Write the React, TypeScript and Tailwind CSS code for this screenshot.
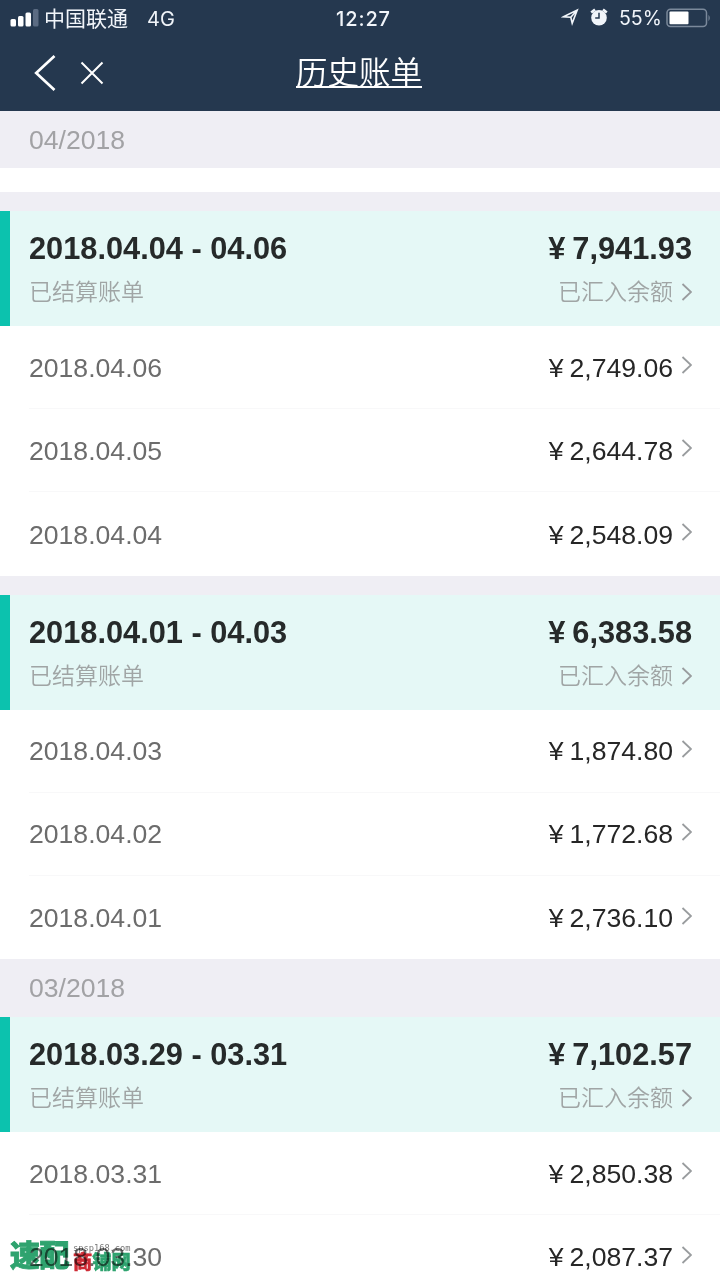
type Day = { date: string; amount: string };

type Bill = {
  range: string;
  total: string;
  days: Day[];
};

const aprilBills: Bill[] = [
  {
    range: "2018.04.04 - 04.06",
    total: "7,941.93",
    days: [
      { date: "2018.04.06", amount: "2,749.06" },
      { date: "2018.04.05", amount: "2,644.78" },
      { date: "2018.04.04", amount: "2,548.09" },
    ],
  },
  {
    range: "2018.04.01 - 04.03",
    total: "6,383.58",
    days: [
      { date: "2018.04.03", amount: "1,874.80" },
      { date: "2018.04.02", amount: "1,772.68" },
      { date: "2018.04.01", amount: "2,736.10" },
    ],
  },
];

const marchBills: Bill[] = [
  {
    range: "2018.03.29 - 03.31",
    total: "7,102.57",
    days: [
      { date: "2018.03.31", amount: "2,850.38" },
      { date: "2018.03.30", amount: "2,087.37" },
    ],
  },
];

function Chevron() {
  return (
    <svg className="w-[11px] h-[18px] shrink-0" viewBox="0 0 11 18" fill="none" stroke="#999c9e" strokeWidth="1.8">
      <path d="M1.5 1 L10 9 L1.5 17" />
    </svg>
  );
}

function StatusBar() {
  return (
    <div className="h-[37px] flex items-center px-[10px] text-[#f1f5fa]">
      <svg className="w-[29px] h-[18px] shrink-0 mt-[-2px]" viewBox="0 0 29 18" fill="#fff">
        <rect x="0.5" y="10" width="5.5" height="7.5" rx="1.5" />
        <rect x="8" y="7" width="5.5" height="10.5" rx="1.5" />
        <rect x="15.5" y="3.5" width="5.5" height="14" rx="1.5" />
        <rect x="23" y="0" width="5.5" height="17.5" rx="1.5" fill="#5b6b82" />
      </svg>
      <span className="ml-[5px] w-[103px] shrink-0 text-[21px] leading-[35px] mt-[-1px]">中国联通</span>
      <span className="w-[189px] shrink-0 font-['Inter'] text-[20px]">4G</span>
      <span className="w-[225px] shrink-0 font-['Inter'] font-medium text-[20px] tracking-[0.9px]">12:27</span>
      <svg className="w-[18px] h-[18px] shrink-0 mt-[-3px]" viewBox="0 0 18 18" fill="none" stroke="currentColor" strokeWidth="1.6">
        <path d="M2.5 8.8 L16.2 2 L11.2 15.2 L9.8 9.2 Z M9.8 9.2 L16 2.2" />
      </svg>
      <svg className="ml-[10px] w-[20px] h-[20px] shrink-0 mt-[-3px]" viewBox="0 0 20 20" fill="none">
        <circle cx="10" cy="10.8" r="7.8" fill="#f1f5fa" />
        <path d="M2.2 5.4 L6 2.4 M14 2.4 L17.8 5.4" stroke="#f1f5fa" strokeWidth="2.6" />
        <path d="M10 5.8 V11 H6.2" stroke="#25384f" strokeWidth="1.5" />
      </svg>
      <span className="ml-[10px] w-[47px] shrink-0 font-['Inter'] text-[19.5px]">55%</span>
      <svg className="w-[46px] h-[20px] shrink-0 mt-[-2px]" viewBox="0 0 46 20">
        <rect x="1" y="1.2" width="39.5" height="17.4" rx="3.5" fill="none" stroke="#7b899b" strokeWidth="1.5" />
        <rect x="3.5" y="3.5" width="19" height="12.8" rx="1" fill="#fff" />
        <path d="M42.5 6.8 Q45 10 42.5 13.2 Z" fill="#7b899b" />
      </svg>
    </div>
  );
}

function NavBar() {
  return (
    <div className="h-[72px] grid grid-cols-3 items-center">
      <div className="flex items-center pl-[34px]">
        <svg className="w-[22px] h-[38px]" viewBox="0 0 22 38" fill="none" stroke="#fff" strokeWidth="2.7">
          <path d="M20.5 2 L2.2 19 L20.5 36" />
        </svg>
        <svg className="ml-[24px] w-[24px] h-[24px]" viewBox="0 0 24 24" fill="none" stroke="#fff" strokeWidth="2">
          <path d="M1.5 1.5 L22.5 22.5 M22.5 1.5 L1.5 22.5" />
        </svg>
      </div>
      <h1 className="text-center text-[31.5px] leading-[40px] font-[350] text-white mr-[2px]">
        <span className="inline-block h-[32px] leading-[34px] border-b-2 border-white mt-[-8px]">历史账单</span>
      </h1>
    </div>
  );
}

function MonthBar({ month, className }: { month: string; className: string }) {
  return (
    <div className={`bg-[#efeef4] pl-[29px] text-[26.6px] text-[#a2a2a5] ${className}`}>{month}</div>
  );
}

function BillGroup({ bill }: { bill: Bill }) {
  return (
    <section>
      <div className="h-[115px] bg-[#e5f8f6] border-l-[10px] border-[#0cc2ae] pl-[19px] pr-[28px] pt-[18px]">
        <div className="flex justify-between h-[40px] leading-[39px] text-[30.75px] font-bold text-[#262a2a]">
          <span>{bill.range}</span>
          <span className="flex">
            <span className="mr-[7px]">¥</span>
            {bill.total}
          </span>
        </div>
        <div className="flex justify-between h-[46px] leading-[46px] text-[23px] font-[350] text-[#a0a5a5]">
          <span>已结算账单</span>
          <span className="flex items-center gap-[8px]">
            已汇入余额
            <Chevron />
          </span>
        </div>
      </div>
      <div className="bg-white pl-[29px]">
        {bill.days.map((day) => (
          <div
            key={day.date}
            className="h-[83.2px] flex items-center justify-between pt-[3px] pr-[28px] border-b border-[#f8f8f9] last:border-b-0 text-[26.6px]"
          >
            <span className="text-[#6c6c6c]">{day.date}</span>
            <span className="flex items-center text-[#262626]">
              <span className="mr-[6px]">¥</span>
              {day.amount}
              <span className="ml-[8px] mt-[-7px] flex">
                <Chevron />
              </span>
            </span>
          </div>
        ))}
      </div>
    </section>
  );
}

// site logo printed over the bottom-left corner
function Watermark() {
  return (
    <div className="absolute left-[10px] top-[1239px] flex h-[34px] font-black mix-blend-multiply">
      <span className="w-[61px] text-[30px] leading-[34px] tracking-[-0.5px] text-[#2fa36f] [-webkit-text-stroke:0.9px_#2fa36f]">
        速配
      </span>
      <div className="ml-[2px]">
        <div className="h-[12px] font-['DejaVu_Sans_Mono'] text-[8.7px] leading-[18px] font-normal tracking-[0px] text-[#777]">
          spsp168.com
        </div>
        <div className="text-[19.3px] leading-[23px] text-[#2fa36f] [-webkit-text-stroke:0.5px_#2fa36f]">
          <span className="text-[#cf2b35] [-webkit-text-stroke:0.5px_#cf2b35]">商</span>铺网
        </div>
      </div>
    </div>
  );
}

export default function App() {
  return (
    <div className="relative w-[720px] h-[1280px] overflow-hidden bg-white font-['Liberation_Sans','Noto_Sans_CJK_SC',sans-serif]">
      <header className="h-[111px] bg-[#25384f]">
        <StatusBar />
        <NavBar />
      </header>

      <MonthBar month="04/2018" className="h-[57px] leading-[59px]" />
      <div className="h-[24px] bg-white" />
      {aprilBills.map((bill) => (
        <div key={bill.range} className="border-t-[19.3px] border-[#efeef4]">
          <BillGroup bill={bill} />
        </div>
      ))}

      <MonthBar month="03/2018" className="h-[58px] leading-[59px]" />
      {marchBills.map((bill) => (
        <BillGroup key={bill.range} bill={bill} />
      ))}

      <Watermark />
    </div>
  );
}
